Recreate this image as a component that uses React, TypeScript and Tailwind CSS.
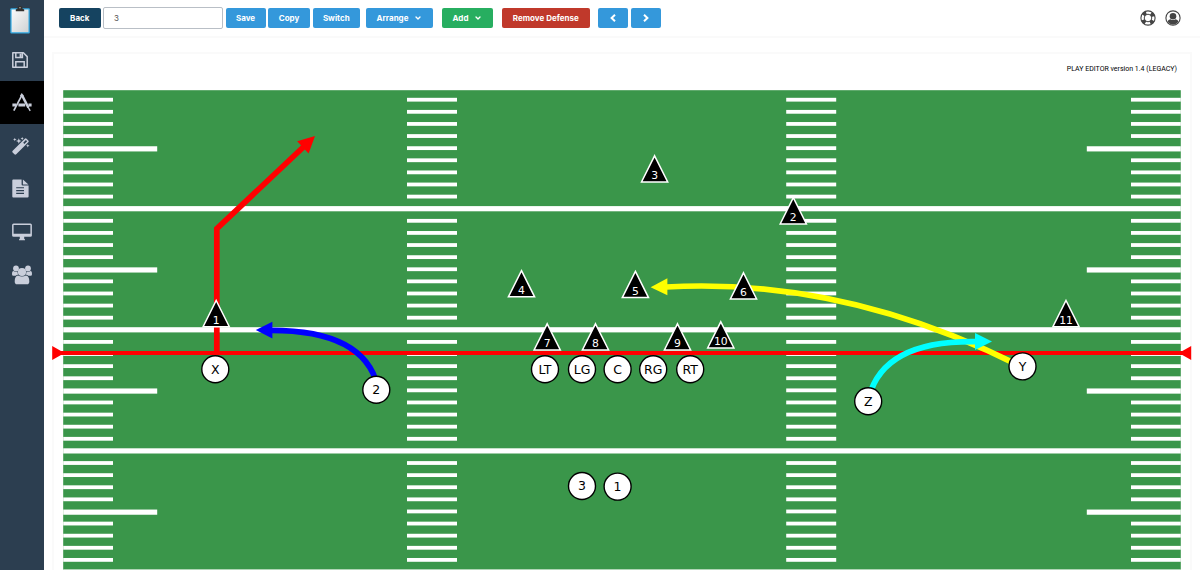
import { useState } from 'react';
import { ChevronDown } from 'lucide-react';

interface Player {
  label: string;
  x: number;
  y: number;
}

const OFFENSE: Player[] = [
  { label: 'X', x: 215.3, y: 369.3 },
  { label: '2', x: 376.3, y: 389.8 },
  { label: 'LT', x: 545, y: 369.3 },
  { label: 'LG', x: 582, y: 369.3 },
  { label: 'C', x: 617.6, y: 369.3 },
  { label: 'RG', x: 653.2, y: 369.3 },
  { label: 'RT', x: 690.2, y: 369.3 },
  { label: 'Z', x: 868.2, y: 401.2 },
  { label: 'Y', x: 1022.5, y: 366.4 },
  { label: '3', x: 582, y: 486 },
  { label: '1', x: 617.6, y: 486.6 },
];

// y is the base of the triangle
const DEFENSE: Player[] = [
  { label: '1', x: 216.2, y: 326.7 },
  { label: '2', x: 793.3, y: 223.9 },
  { label: '3', x: 654.6, y: 182 },
  { label: '4', x: 521.5, y: 296.8 },
  { label: '5', x: 635.4, y: 297.6 },
  { label: '6', x: 743.5, y: 299 },
  { label: '7', x: 547.2, y: 350 },
  { label: '8', x: 595.5, y: 350 },
  { label: '9', x: 677.5, y: 350 },
  { label: '10', x: 720.8, y: 348 },
  { label: '11', x: 1066, y: 326.7 },
];

const YARD = 12.11;
const FIRST_LINE = 208.7;
const TICKS = Array.from({ length: 40 }, (_, i) => i + 1);

function ClipboardIcon() {
  return (
    <svg className="w-5 h-7" viewBox="0 0 20 28">
      <defs>
        <linearGradient id="paper" x1="0" y1="0" x2="1" y2="1">
          <stop offset="0" stopColor="#fafafa" />
          <stop offset="1" stopColor="#cfd2d4" />
        </linearGradient>
      </defs>
      <rect x="0.3" y="2.2" width="19.5" height="25.3" rx="1" fill="#35aae2" />
      <rect x="1.6" y="3.5" width="16.9" height="22.7" fill="url(#paper)" />
      <path d="M5.8 5.2V3.6L7.6 2.6 8 .8Q10 -.8 12 .8L12.4 2.6 14.2 3.6V5.2Z" fill="#33302e" />
      <circle cx="10" cy="1.8" r="0.8" fill="#b5b0aa" />
    </svg>
  );
}

function SaveIcon() {
  return (
    <svg className="w-4 h-4" viewBox="0 0 16 16" fill="none" stroke="currentColor" strokeWidth="1.5">
      <path d="M.8 .8H11.4L15.2 4.6V15.2H.8Z" strokeLinejoin="round" />
      <path d="M3.8 15V9.8H12.2V15M3.8 1V5.6H10.4V1" />
      <path d="M8.6 1.6V5" strokeWidth="2" />
    </svg>
  );
}

function DesignIcon() {
  return (
    <svg className="w-5 h-5" viewBox="0 0 20 20" fill="none" stroke="currentColor">
      <path d="M10.2 2.6 16.4 14.6" strokeWidth="2.4" />
      <path d="M16 14 18.2 17.8" strokeWidth="1.4" />
      <path d="M9.8 2.4 1.8 17.6" strokeWidth="1.7" />
      <path d="M8.6 3.2 9.8 1.4 11.2 3" strokeWidth="1.6" />
      <path d="M.4 12H4.2M6.4 12H13.2M16.4 12H19.6" strokeWidth="3.2" />
    </svg>
  );
}

function WandIcon() {
  return (
    <svg className="w-[18px] h-[18px]" viewBox="0 0 18 18" fill="currentColor">
      <path
        fillRule="evenodd"
        d="M.7 13.8 12.8 1.7Q13.7.8 14.6 1.7L16.3 3.4Q17.2 4.3 16.3 5.2L4.2 17.3Q3.3 18.2 2.4 17.3L.7 15.6Q-.2 14.7 .7 13.8ZM11.2 5.8 12.4 7 15.1 4.2 13.9 3Z"
      />
      <path d="M2.8.7 3.3 2 4.6 2.5 3.3 3 2.8 4.3 2.3 3 1 2.5 2.3 2ZM6.8 1.2 7.6 3.2 9.6 4 7.6 4.8 6.8 6.8 6 4.8 4 4 6 3.2ZM10.2 0 10.7 1.1 11.8 1.6 10.7 2.1 10.2 3.2 9.7 2.1 8.6 1.6 9.7 1.1ZM15.8 7 16.3 8.3 17.6 8.8 16.3 9.3 15.8 10.6 15.3 9.3 14 8.8 15.3 8.3Z" />
    </svg>
  );
}

function DocumentIcon() {
  return (
    <svg className="w-[17px] h-[19px]" viewBox="0 0 17 19">
      <path
        d="M1.2.4H9.6V5.5Q9.6 6.6 10.7 6.6H16.6V17.4Q16.6 18.5 15.5 18.5H1.2Q.3 18.5.3 17.4V1.4Q.3.4 1.2.4ZM10.9.5 16.4 5.4H10.9Z"
        fill="currentColor"
      />
      <path d="M4.2 8.8H12M4.2 11.6H12M4.2 14.4H12" stroke="#2c3e50" strokeWidth="1.1" />
    </svg>
  );
}

function DesktopIcon() {
  return (
    <svg className="w-5 h-[18px]" viewBox="0 0 20 18" fill="currentColor">
      <path
        fillRule="evenodd"
        d="M1.6.5H18.4Q19.9.5 19.9 2V12.4Q19.9 13.8 18.4 13.8H12.2V15.8L13 16.4V17.3H7V16.4L7.8 15.8V13.8H1.6Q.1 13.8.1 12.4V2Q.1.5 1.6.5ZM1.6 1.9V10.8H18.4V1.9Z"
      />
    </svg>
  );
}

function UsersIcon() {
  return (
    <svg className="w-5 h-5" viewBox="0 0 20 20" fill="currentColor">
      <circle cx="4" cy="3.5" r="2.9" />
      <circle cx="16" cy="3.5" r="2.9" />
      <path d="M0 9.3Q0 6 1.5 6Q4 7.5 5.5 6.6Q5.3 8.6 6.4 9.6 4.6 9.8 3.6 10.8H1.4Q0 10.8 0 9.3ZM20 9.3Q20 6 18.5 6Q16 7.5 14.5 6.6Q14.7 8.6 13.6 9.6 15.4 9.8 16.4 10.8H18.6Q20 10.8 20 9.3Z" />
      <circle cx="10" cy="7" r="4.1" />
      <path d="M6 10.4Q10 12.6 14 10.4Q17.3 11 17.3 16.4Q17.3 19.2 15 19.2H5Q2.7 19.2 2.7 16.4Q2.7 11 6 10.4Z" />
    </svg>
  );
}

function LifebuoyIcon() {
  return (
    <svg className="w-4 h-4" viewBox="0 0 16 16" fill="none" stroke="currentColor">
      <circle cx="8" cy="8" r="7.1" strokeWidth="1.1" />
      <circle cx="8" cy="8" r="3.8" strokeWidth="1" />
      <circle cx="8" cy="8" r="5.4" strokeWidth="3.6" strokeDasharray="3.6 4.88" strokeDashoffset="-2.44" />
    </svg>
  );
}

function AccountIcon() {
  return (
    <svg className="w-4 h-4" viewBox="0 0 16 16">
      <circle cx="8" cy="8" r="7.1" fill="none" stroke="currentColor" strokeWidth="1.1" />
      <circle cx="8" cy="6.3" r="3.3" fill="currentColor" />
      <path d="M2.4 11.2Q4 9.4 5.6 9.2Q8 11 10.4 9.2Q12 9.4 13.6 11.2Q11.5 14.5 8 14.5Q4.5 14.5 2.4 11.2Z" fill="currentColor" />
    </svg>
  );
}

const NAV_ITEMS = [
  { id: 'save', icon: <SaveIcon /> },
  { id: 'editor', icon: <DesignIcon /> },
  { id: 'wizard', icon: <WandIcon /> },
  { id: 'docs', icon: <DocumentIcon /> },
  { id: 'display', icon: <DesktopIcon /> },
  { id: 'team', icon: <UsersIcon /> },
];

function Sidebar() {
  return (
    <nav className="w-[43.5px] h-full bg-[#2c3e50] text-[#c9cedb] flex flex-col flex-shrink-0">
      <div className="h-[38px] pl-[10px] pt-[6px]">
        <ClipboardIcon />
      </div>
      {NAV_ITEMS.map(item => (
        <button
          key={item.id}
          className={`h-[43px] pl-[12px] flex-shrink-0 flex items-center ${item.id === 'editor' ? 'bg-black' : ''}`}
        >
          {item.icon}
        </button>
      ))}
    </nav>
  );
}

function Toolbar() {
  const [name, setName] = useState('3');
  const btn = 'h-[19.5px] rounded-[2px] flex items-center justify-center flex-shrink-0 whitespace-nowrap';

  return (
    <header className="h-[38px] flex items-center pl-[15.5px] pr-[19px] border-b-2 border-[#fafafa] text-[8px] font-bold text-white">
      <button className={`${btn} w-[41.5px] bg-[#154360]`}>Back</button>
      <input
        value={name}
        onChange={e => setName(e.target.value)}
        className="w-[120px] h-[22px] ml-[2.5px] px-[10px] border border-[#b9bfc6] rounded-[2px] text-[8px] font-normal text-[#555] outline-none"
      />
      <button className={`${btn} w-[40px] ml-[2.5px] bg-[#3498db]`}>Save</button>
      <button className={`${btn} w-[42px] ml-[2.5px] bg-[#3498db]`}>Copy</button>
      <button className={`${btn} w-[47.5px] ml-[2.5px] bg-[#3498db]`}>Switch</button>
      <button className={`${btn} w-[67px] ml-[6px] gap-[6px] bg-[#3498db]`}>
        Arrange <ChevronDown className="w-2 h-2" strokeWidth={4} />
      </button>
      <button className={`${btn} w-[51px] ml-[9px] gap-[6px] bg-[#27ae60]`}>
        Add <ChevronDown className="w-2 h-2" strokeWidth={4} />
      </button>
      <button className={`${btn} w-[87.5px] ml-[9px] bg-[#c0392b]`}>Remove Defense</button>
      <button className={`${btn} w-[30px] h-[20.5px] ml-[8.5px] bg-[#3498db]`}>
        <svg className="w-2 h-2" viewBox="0 0 8 8" fill="none" stroke="currentColor" strokeWidth="2">
          <path d="M6 .8 2.6 4 6 7.2" />
        </svg>
      </button>
      <button className={`${btn} w-[30px] h-[20.5px] ml-[2.5px] bg-[#3498db]`}>
        <svg className="w-2 h-2" viewBox="0 0 8 8" fill="none" stroke="currentColor" strokeWidth="2">
          <path d="M2 .8 5.4 4 2 7.2" />
        </svg>
      </button>
      <div className="ml-auto flex items-center gap-[9px] text-[#444]">
        <LifebuoyIcon />
        <AccountIcon />
      </div>
    </header>
  );
}

function FieldMarkings() {
  return (
    <g fill="#fff">
      {TICKS.map(n => {
        const y = FIRST_LINE + (n - 10) * YARD;
        if (n % 10 === 0) {
          return <rect key={n} x="63.2" y={y - 2.6} width="1117.6" height="5.2" />;
        }
        const half = n % 10 === 5;
        return (
          <g key={n}>
            {half ? (
              <>
                <rect x="63.2" y={y - 1.9} width="94" height="5.2" />
                <rect x="1086.8" y={y - 1.9} width="94" height="5.2" />
              </>
            ) : (
              <>
                <rect x="63.2" y={y - 1.9} width="49.8" height="3.8" />
                <rect x="1131" y={y - 1.9} width="49.8" height="3.8" />
              </>
            )}
            <rect x="407" y={y - 1.9} width="50" height="3.8" />
            <rect x="786.2" y={y - 1.9} width="50" height="3.8" />
          </g>
        );
      })}
    </g>
  );
}

function Field() {
  return (
    <svg
      className="block w-[1140px] h-[485px] font-['DejaVu_Sans',sans-serif]"
      viewBox="52 85 1140 485"
      textAnchor="middle"
    >
      <rect x="63.2" y="90.2" width="1117.6" height="480" fill="#3a964a" />
      <FieldMarkings />

      {/* line of scrimmage */}
      <path d="M54 353H1190" stroke="#f00" strokeWidth="3.8" />
      <path d="M52.2 346V360L64.5 353ZM1191.2 346V360L1178.8 353Z" fill="#f00" />

      {/* routes */}
      <g fill="none" strokeWidth="5.7">
        <path d="M216.8 353V228.8L305 145.5" stroke="#f00" />
        <path d="M377.5 386Q364 330 270 330.3" stroke="#00f" />
        <path d="M1022 367Q844 277 666 287" stroke="#ff0" />
        <path d="M869 397Q884 340 977 341.7" stroke="#0ff" />
      </g>
      <path d="M315 136 297.2 141.3 308.6 153.6Z" fill="#f00" />
      <path d="M255.8 330 272.4 321.7V338.5Z" fill="#00f" />
      <path d="M650.6 287.2 667.4 278.3V295.2Z" fill="#ff0" />
      <path d="M992 341.4 975 333V350Z" fill="#0ff" />

      {DEFENSE.map(p => (
        <g key={p.label}>
          <path
            d={`M${p.x} ${p.y - 26.2}L${p.x + 13.1} ${p.y}H${p.x - 13.1}Z`}
            fill="#000"
            stroke="#fff"
            strokeWidth="1.5"
          />
          <text x={p.x} y={p.y - 3} fontSize="10.8" fill="#fff">{p.label}</text>
        </g>
      ))}

      {OFFENSE.map(p => (
        <g key={p.label}>
          <circle cx={p.x} cy={p.y} r="13.5" fill="#fff" stroke="#000" strokeWidth="1.4" />
          <text x={p.x} y={p.y + 4.3} fontSize="12.5" fill="#000">{p.label}</text>
        </g>
      ))}
    </svg>
  );
}

export default function App() {
  return (
    <div className="w-[1200px] h-[570px] flex overflow-hidden bg-white font-['Inter',sans-serif]">
      <Sidebar />
      <div className="flex-1 min-w-0">
        <Toolbar />
        <main className="pt-[14px] pl-[8.5px]">
          <section className="w-[1140px] h-[520px] border-t-2 border-x-2 border-[#fafafa]">
            <div className="h-[31px] flex items-center justify-end pr-[13px] text-[7px] text-black font-['Roboto',sans-serif]">
              PLAY EDITOR version 1.4 (LEGACY)
            </div>
            <div className="-mx-[2px]">
              <Field />
            </div>
          </section>
        </main>
      </div>
    </div>
  );
}
